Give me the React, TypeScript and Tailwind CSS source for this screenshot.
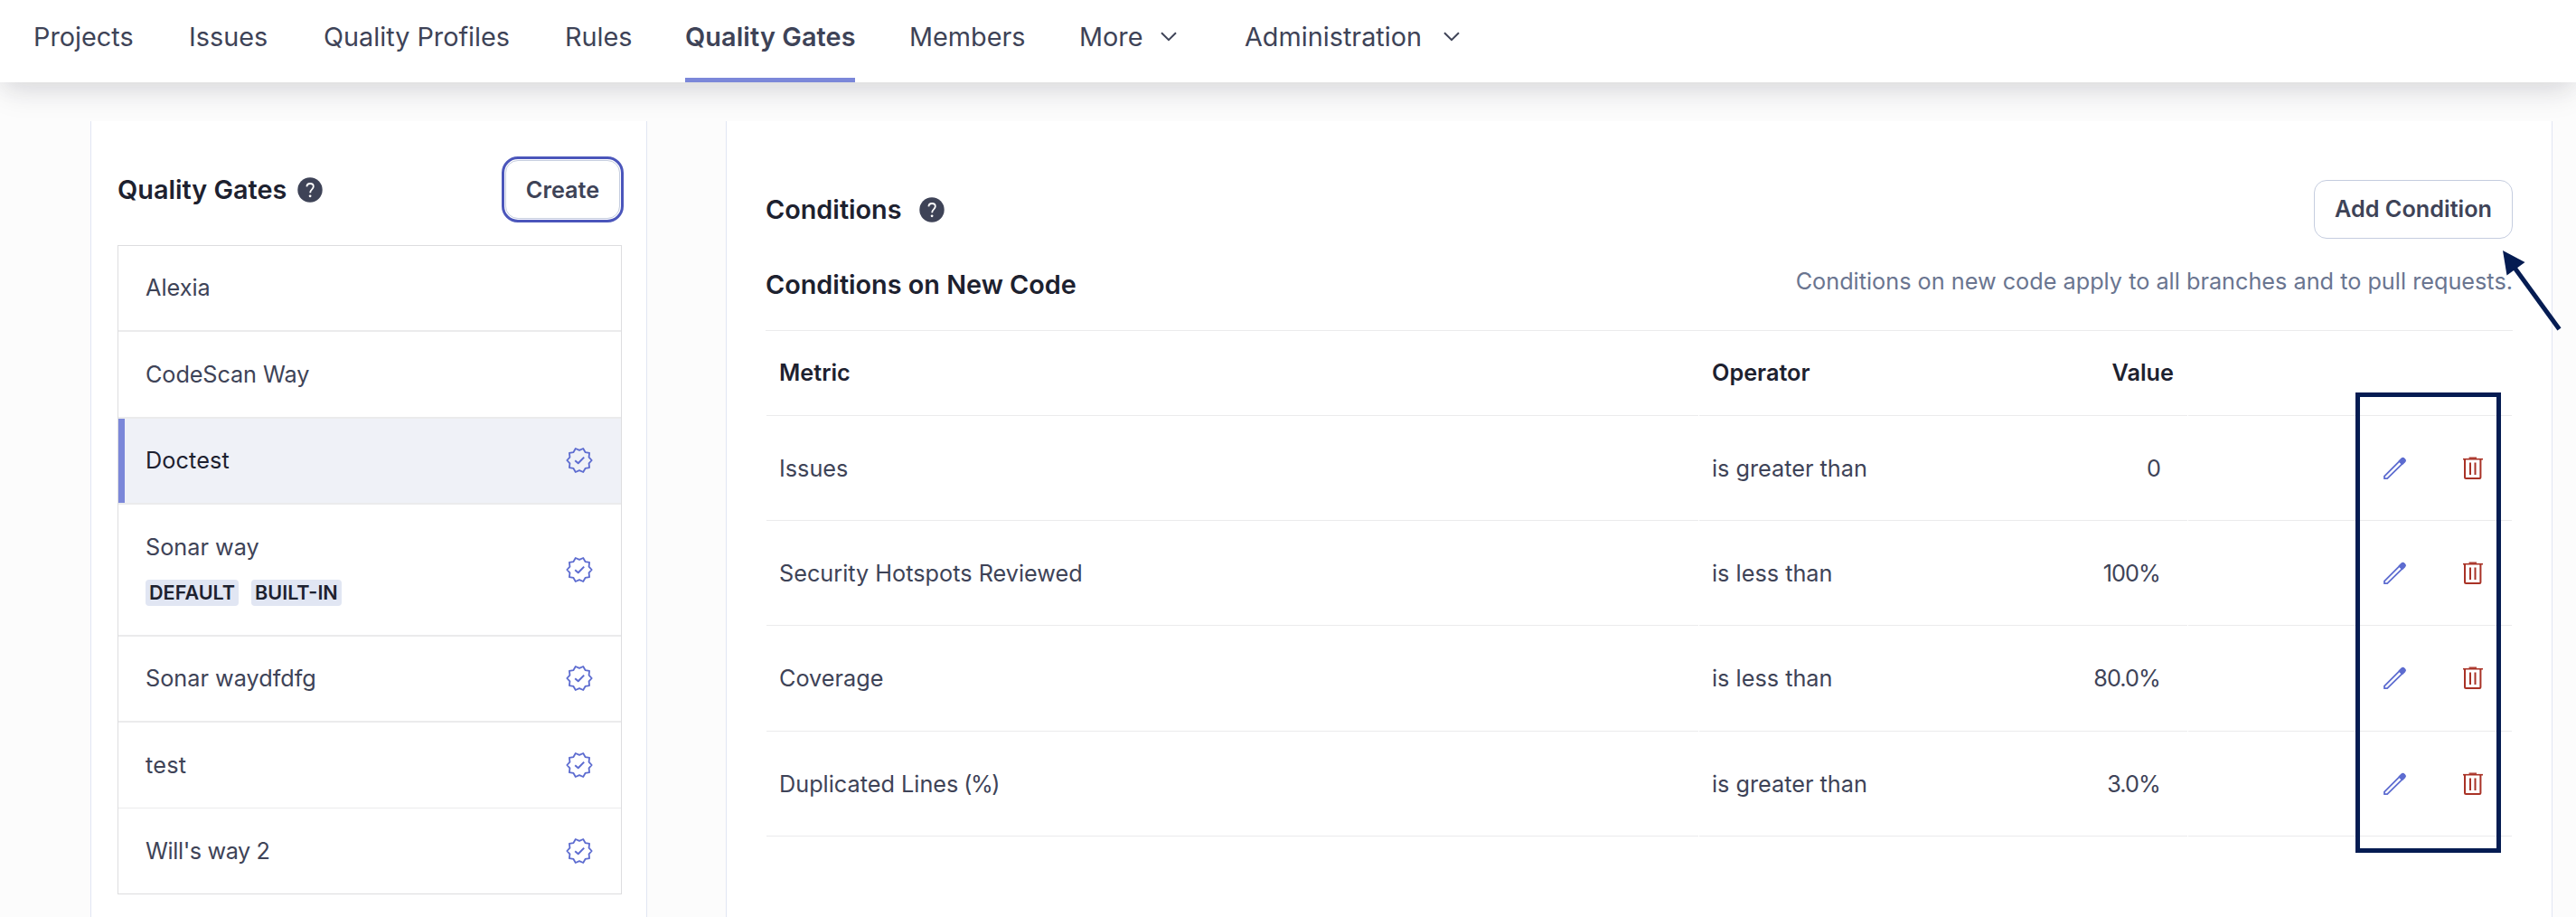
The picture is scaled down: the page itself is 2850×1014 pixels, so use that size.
const NAV = [
  { label: "Projects", cls: "w-[172px]" },
  { label: "Issues", cls: "w-[149px]" },
  { label: "Quality Profiles", cls: "w-[267px]" },
  { label: "Rules", cls: "w-[133px]" },
];

const GATES = [
  { name: "Alexia", cls: "h-[95px] border-b-2" },
  { name: "CodeScan Way", cls: "h-[96px] border-b-2 tracking-[-0.1px]" },
  { name: "Doctest", cls: "h-[95px] border-b-2 tracking-[0.1px]", ok: true, active: true },
  { name: "Sonar way", cls: "h-[146px] border-b-2", ok: true, tags: ["DEFAULT", "BUILT-IN"] },
  { name: "Sonar waydfdfg", cls: "h-[95px] border-b-2", ok: true },
  { name: "test", cls: "h-[95px] border-b tracking-[0.2px]", ok: true },
  { name: "Will's way 2", cls: "h-[94px] tracking-[-0.4px]", ok: true },
];

const CONDITIONS = [
  { metric: "Issues", op: "is greater than", value: "0", cls: "h-[116px]" },
  { metric: "Security Hotspots Reviewed", op: "is less than", value: "100%", cls: "h-[116px]" },
  { metric: "Coverage", op: "is less than", value: "80.0%", cls: "h-[117px]" },
  { metric: "Duplicated Lines", unit: "(%)", op: "is greater than", value: "3.0%", cls: "h-[116px]" },
];

const CELL = "flex items-center border-b border-[#ebebec]";

function Chevron() {
  return (
    <svg width="18" height="11" viewBox="0 0 18 11" fill="none" stroke="#3e4357" strokeWidth="2">
      <path d="M1 1.2 9 9.2 17 1.2" />
    </svg>
  );
}

function Help() {
  return (
    <svg width="28" height="28" viewBox="0 0 28 28" fill="none" className="shrink-0">
      <circle cx="14" cy="14" r="13.7" fill="#3e4357" />
      <path d="M10.4 10.4C10.5 8.2 12.1 7 14.1 7s3.7 1.3 3.7 3.3c0 3-3.6 3.2-3.6 6.9" stroke="#fff" strokeWidth="1.8" />
      <circle cx="14.1" cy="20.8" r="1.4" fill="#fff" />
    </svg>
  );
}

// Ten-pointed seal outline: tips and valleys alternate every 18 degrees.
const SEAL = Array.from({ length: 20 }, (_, i) => {
  const r = i % 2 ? 11.1 : 13.7;
  const a = (i * Math.PI) / 10;
  return `${(15 + r * Math.cos(a)).toFixed(2)},${(15 + r * Math.sin(a)).toFixed(2)}`;
}).join(" ");

function Verified() {
  return (
    <svg width="30" height="30" viewBox="0 0 30 30" fill="none" stroke="#5d6cd0" strokeWidth="1.8" strokeLinejoin="round" className="shrink-0">
      <polygon points={SEAL} />
      <path d="M10.2 15.2 13.7 18.2 20.2 11.6" strokeWidth="2" />
    </svg>
  );
}

function Pencil() {
  return (
    <svg width="26" height="26" viewBox="0 0 26 26" fill="none" stroke="#5d6cd0" strokeWidth="1.8" strokeLinejoin="round">
      <path d="M1 24.2V21.6L20 2.6a1.8 1.8 0 0 1 2.5 0l.6.6a1.8 1.8 0 0 1 0 2.5L4.2 24.2z" />
      <path d="M17.6 5 20.2 2.4a1.9 1.9 0 0 1 2.6 0l.5.5a1.9 1.9 0 0 1 0 2.6L20.7 8.1z" fill="#5d6cd0" />
    </svg>
  );
}

function Trash() {
  return (
    <svg width="22" height="26" viewBox="0 0 22 26" fill="none" stroke="#a93226" strokeWidth="2">
      <path d="M0 2.7h22" strokeWidth="1.6" />
      <path d="M6.6 1.2h8.4" strokeWidth="1.4" />
      <path d="M2 3v20c0 .7.4 1.1 1.1 1.1h15.2c.7 0 1.1-.4 1.1-1.1V3" />
      <path d="M8 6.5v13.6M13.5 6.5v13.6" />
    </svg>
  );
}

export default function App() {
  return (
    <div className="relative flex h-[1014px] w-[2850px] flex-col overflow-hidden bg-[#fcfcfc] font-['Inter',sans-serif] text-[25.25px] leading-8 text-[#3e4357]">
      <header className="h-[91px] shrink-0 bg-white shadow-[0_16px_32px_-4px_rgba(29,33,47,0.1),0_4px_24px_0_rgba(29,33,47,0.07)]">
        <nav className="flex h-full pl-[37px] text-[28.8px] whitespace-nowrap">
          {NAV.map((n) => (
            <a key={n.label} className={`${n.cls} pt-[25px]`}>{n.label}</a>
          ))}
          <a className="h-full w-[188px] border-b-[5px] border-[#7b87d9] pt-[25px] font-semibold tracking-[0.1px]">Quality Gates</a>
          <a className="ml-[60px] w-[188px] pt-[25px]">Members</a>
          <a className="flex w-[183px] pt-[25px]"><span className="w-[90px]">More</span><span className="pt-[10px]"><Chevron /></span></a>
          <a className="flex pt-[25px]"><span className="w-[220px]">Administration</span><span className="pt-[10px]"><Chevron /></span></a>
        </nav>
      </header>

      <div className="relative mt-[43px] flex flex-1 pl-[100px]">
        <aside className="w-[616px] border-x border-[#e1e6f3] bg-white px-[29px]">
          <div className="flex h-[137px] items-start justify-between pt-[39px]">
            <div className="flex h-[73px] items-center gap-3">
              <h2 className="text-[28.8px] font-semibold text-[#1d212f]">Quality Gates</h2>
              <Help />
            </div>
            <button className="-mr-[4px] h-[73px] w-[135px] rounded-[18px] border-[3px] border-[#4b56bb] p-px">
              <span className="flex h-full items-center justify-center rounded-[14px] border border-[#c5cddf] font-semibold">Create</span>
            </button>
          </div>
          <ul className="flex w-[558px] flex-col border border-[#dddddf]">
            {GATES.map((g) => (
              <li
                key={g.name}
                className={`${g.cls} flex items-center justify-between border-[#ebebec] pr-[31px] ${g.active ? "bg-[#eff1f7] text-[#1d212f]" : ""}`}
              >
                <div className={`flex h-full flex-col justify-center pb-px ${g.active ? "border-l-[7px] border-[#7b87d9] pl-[23px]" : "pl-[30px]"}`}>
                  <span>{g.name}</span>
                  {g.tags && (
                    <div className="mt-[20px] flex gap-[14px] text-[21.6px] font-semibold text-[#1d212f]">
                      {g.tags.map((t) => (
                        <span key={t} className="h-[29px] rounded-[4px] bg-[#e1e6f3] px-1 leading-[29px]">{t}</span>
                      ))}
                    </div>
                  )}
                </div>
                {g.ok && <span className="pb-px"><Verified /></span>}
              </li>
            ))}
          </ul>
        </aside>

        <main className="ml-[87px] w-[2021px] border-x border-[#e1e6f3] bg-white pt-[65px] pr-[43px] pl-[43px]">
          <div className="flex h-[65px] items-center justify-between">
            <div className="flex items-center gap-[19px]">
              <h2 className="text-[28.8px] font-semibold text-[#1d212f]">Conditions</h2>
              <Help />
            </div>
            <button className="h-[65px] w-[220px] rounded-[14px] border border-[#c5cddf] pb-px font-semibold">Add Condition</button>
          </div>
          <div className="flex h-[101px] justify-between">
            <h3 className="pt-[35px] text-[28.8px] font-semibold text-[#1d212f]">Conditions on New Code</h3>
            <p className="pt-[31px] text-[#6a7590]">Conditions on new code apply to all branches and to pull requests.</p>
          </div>
          <div className="border-t border-[#ebebec] px-px">
            <div className="grid h-[94px] grid-cols-[1031px_540px_1fr] gap-px font-semibold text-[#1d212f]">
              <div className={`${CELL} pb-[2px] pl-[14px]`}>Metric</div>
              <div className={`${CELL} justify-between pr-[15px] pb-[2px] pl-[14px]`}>
                <span>Operator</span>
                <span>Value</span>
              </div>
              <div className={CELL} />
            </div>
            {CONDITIONS.map((c) => (
              <div key={c.metric} className={`${c.cls} grid grid-cols-[1031px_540px_1fr] gap-px`}>
                <div className={`${CELL} gap-[6px] pl-[14px]`}>
                  <span>{c.metric}</span>
                  {c.unit && <span className="tracking-[-1.5px]">{c.unit}</span>}
                </div>
                <div className={`${CELL} justify-between pr-[30px] pl-[14px]`}>
                  <span>{c.op}</span>
                  <span className="tracking-[-0.9px]">{c.value}</span>
                </div>
                <div className={`${CELL} gap-[62px] pl-[216px]`}>
                  <Pencil />
                  <Trash />
                </div>
              </div>
            ))}
          </div>
        </main>
      </div>

      <div className="absolute top-[434px] left-[2606px] h-[509px] w-[161px] border-[5px] border-[#051c52]" />
      <svg className="absolute top-[270px] left-[2760px]" width="80" height="100" viewBox="2760 270 80 100">
        <path d="M2769 277 2793.5 290 2773.5 304.5z" fill="#051c52" />
        <path d="M2782 296 2831.5 364" stroke="#051c52" strokeWidth="5" />
      </svg>
    </div>
  );
}
